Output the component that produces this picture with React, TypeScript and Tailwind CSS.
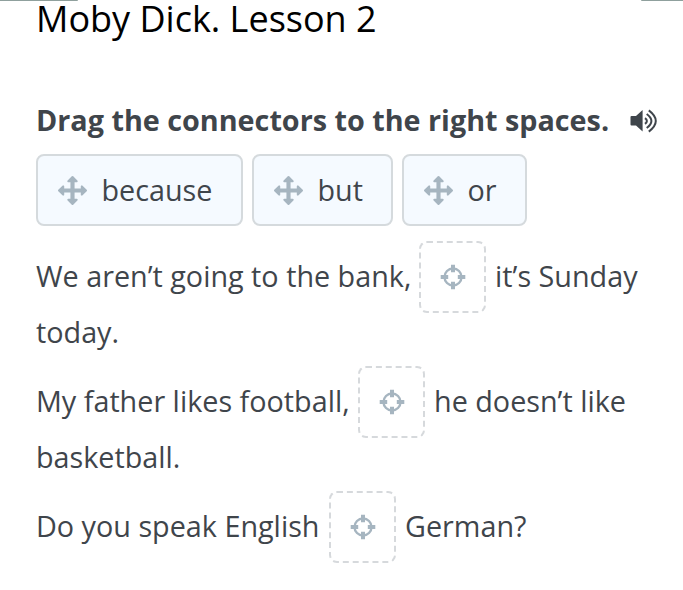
type IconProps = { className?: string };

const MoveIcon = ({ className = "" }: IconProps) => (
	<svg viewBox="0 0 1792 1792" className={className} fill="currentColor">
		<path d="M1792 896q0 26-19 45l-256 256q-19 19-45 19t-45-19-19-45v-128h-384v384h128q26 0 45 19t19 45-19 45l-256 256q-19 19-45 19t-45-19l-256-256q-19-19-19-45t19-45 45-19h128v-384h-384v128q0 26-19 45t-45 19-45-19l-256-256q-19-19-19-45t19-45l256-256q19-19 45-19t45 19 19 45v128h384v-384h-128q-26 0-45-19t-19-45 19-45l256-256q19-19 45-19t45 19l256 256q19 19 19 45t-19 45-45 19h-128v384h384v-128q0-26 19-45t45-19 45 19l256 256q19 19 19 45z" />
	</svg>
);

const TargetIcon = ({ className = "" }: IconProps) => (
	<svg viewBox="0 0 26 26" className={className} fill="none" stroke="currentColor">
		<circle cx="13" cy="13" r="8.5" strokeWidth="2.4" />
		<path d="M13 .7v7.500M13 17.800v7.500M.7 13h7.500M17.800 13h7.500" strokeWidth="4" />
	</svg>
);

const SpeakerIcon = ({ className = "" }: IconProps) => (
	<svg viewBox="0 0 28 24" className={className} fill="currentColor">
		<path d="M.5 8q0-1 1-1H6L12.600 1V22.500L6 16.500H1.500q-1 0-1-1z" />
		<path
			d="M15 9.100q3.800 2.900 0 5.800M16.700 5q9.400 7 0 14M18.800 1.400q14 10.600 0 21.200"
			fill="none"
			stroke="currentColor"
			strokeWidth="2"
		/>
	</svg>
);

type ConnectorProps = { label: string; width: string };

const Connector = ({ label, width }: ConnectorProps) => (
	<div
		className={`${width} flex h-[72px] shrink-0 items-center rounded-[8px] border-2 border-[#d5dadd] bg-[#f5faff] pl-5`}
	>
		<MoveIcon className="mr-[14.5px] size-[29px] shrink-0 text-[#a6b5c0]" />
		<span>{label}</span>
	</div>
);

const Gap = () => (
	<div className="mx-[9px] flex h-[72px] w-[67px] shrink-0 items-center justify-center rounded-[8px] border-2 border-dashed border-[#d6d9dc]">
		<TargetIcon className="size-[26px] text-[#a6b5c0]" />
	</div>
);

const App = () => (
	<div className="h-[590px] w-[683px] overflow-hidden bg-white font-['Open_Sans',sans-serif] text-[28.75px] whitespace-nowrap text-[#3f454b]">
		<div className="flex h-px justify-between">
			<div className="w-[78px] rounded-br-full bg-[#8fa09d]" />
			<div className="w-[42px] rounded-bl-full bg-[#8fa09d]" />
		</div>
		<div className="pl-9">
			<h1 className="h-[99px] text-[36px] leading-[36px] text-black">Moby Dick. Lesson 2</h1>
			<div className="flex h-[54px] items-start">
				<h2 className="w-[594px] leading-[40px] font-bold">Drag the connectors to the right spaces.</h2>
				<SpeakerIcon className="mt-[9px] h-6 w-7" />
			</div>
			<div className="flex gap-[9px]">
				<Connector label="because" width="w-[207px]" />
				<Connector label="but" width="w-[141px]" />
				<Connector label="or" width="w-[125px]" />
			</div>
			<div className="mt-[14.5px] flex items-center">
				<span className="-mt-0.5 w-[374px]">We aren’t going to the bank,</span>
				<Gap />
				<span className="-mt-0.5">it’s Sunday</span>
			</div>
			<p className="h-[53.5px] leading-[37px]">today.</p>
			<div className="flex items-center">
				<span className="-mt-0.5 w-[313px]">My father likes football,</span>
				<Gap />
				<span className="-mt-0.5">he doesn’t like</span>
			</div>
			<p className="h-[53px] leading-[37px]">basketball.</p>
			<div className="flex items-center">
				<span className="-mt-0.5 w-[284px]">Do you speak English</span>
				<Gap />
				<span className="-mt-0.5">German?</span>
			</div>
		</div>
	</div>
);

export default App;
